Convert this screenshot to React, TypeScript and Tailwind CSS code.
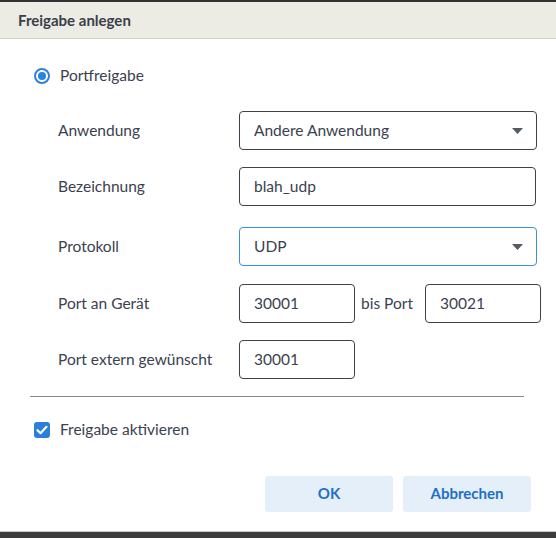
import React from 'react';

// ─── Share dialog ────────────────────────────────────────────────────────────

const font = { fontFamily: 'Lato, "Noto Sans", sans-serif' };

const Caret: React.FC = () => (
  <svg width="11" height="6" viewBox="0 0 11 6" className="shrink-0">
    <path d="M0 0h11L5.5 6z" fill="#555a62" />
  </svg>
);

const Label: React.FC<{ children: React.ReactNode }> = ({ children }) => (
  <div className="w-[181px] shrink-0 text-[15.5px] text-[#3b4150]">{children}</div>
);

const Field: React.FC<{
  value: string;
  width: string;
  select?: boolean;
  focused?: boolean;
}> = ({ value, width, select, focused }) => (
  <div
    className={`${width} h-[39px] shrink-0 flex items-center justify-between rounded-[4px] border bg-white pl-[14px] pr-[13px] text-[15.5px] text-[#3b4150] ${
      focused ? 'border-[#3a8ee6]' : 'border-[#3d424a]'
    }`}
  >
    <span>{value}</span>
    {select && <Caret />}
  </div>
);

const Row: React.FC<{ label: string; className?: string; children: React.ReactNode }> = ({
  label,
  className,
  children,
}) => (
  <div className={`flex items-center ${className ?? ''}`}>
    <Label>{label}</Label>
    {children}
  </div>
);

const App: React.FC = () => (
  <div className="w-[556px] h-[538px] flex flex-col bg-white overflow-hidden" style={font}>
    {/* Title bar */}
    <div className="h-[2px] bg-[#333333]" />
    <div className="h-[37px] flex items-center px-[18px] bg-[#ecebe4] border-b border-[#d2d2d2]">
      <span className="text-[15px] font-bold text-[#3a3f4a]">Freigabe anlegen</span>
    </div>

    {/* Body */}
    <div className="flex-1 flex flex-col pl-[30px]">
      <div className="flex items-center gap-[10px] mt-[25px] pl-[4px]">
        <div className="w-[16px] h-[16px] rounded-full border-2 border-[#2b83dc] flex items-center justify-center">
          <div className="w-[8px] h-[8px] rounded-full bg-[#2b83dc]" />
        </div>
        <span className="text-[15.5px] text-[#3b4150]">Portfreigabe</span>
      </div>

      <div className="flex flex-col gap-[17px] mt-[24px] pl-[28px]">
        <Row label="Anwendung">
          <Field value="Andere Anwendung" width="w-[298px]" select />
        </Row>
        <Row label="Bezeichnung">
          <Field value="blah_udp" width="w-[297px]" />
        </Row>
        <Row label="Protokoll" className="mt-[4px]">
          <Field value="UDP" width="w-[298px]" select focused />
        </Row>
        <Row label="Port an Gerät" className="mt-[1px]">
          <Field value="30001" width="w-[116px]" />
          <span className="ml-[6px] mr-[12px] shrink-0 text-[15.5px] text-[#3b4150]">bis Port</span>
          <Field value="30021" width="w-[116px]" />
        </Row>
        <Row label="Port extern gewünscht">
          <Field value="30001" width="w-[116px]" />
        </Row>
      </div>

      <div className="h-px bg-[#8a8a8a] mt-[17px] w-[494px]" />

      <div className="flex items-center gap-[10px] mt-[21px] pl-[4px]">
        <div className="w-[16px] h-[16px] rounded-[3px] bg-[#2b7fd6] flex items-center justify-center">
          <svg width="12" height="10" viewBox="0 0 12 10">
            <path d="M1.5 5.2l3 3L10.5 1.8" fill="none" stroke="#fff" strokeWidth="2.2" strokeLinecap="round" strokeLinejoin="round" />
          </svg>
        </div>
        <span className="text-[15.5px] text-[#3b4150]">Freigabe aktivieren</span>
      </div>

      <div className="flex justify-end gap-[10px] mt-[34px] mr-[25px]">
        <button className="w-[128px] h-[36px] rounded-[3px] bg-[#e4eff9] text-[15px] font-bold text-[#1f6fc7]">
          OK
        </button>
        <button className="w-[128px] h-[36px] rounded-[3px] bg-[#e4eff9] text-[15px] font-bold text-[#1f6fc7]">
          Abbrechen
        </button>
      </div>
    </div>

    {/* Taskbar strip below the dialog */}
    <div className="h-px bg-[#c8c8c8]" />
    <div className="h-[6px] bg-[#3c3c3c]" />
  </div>
);

export default App;
